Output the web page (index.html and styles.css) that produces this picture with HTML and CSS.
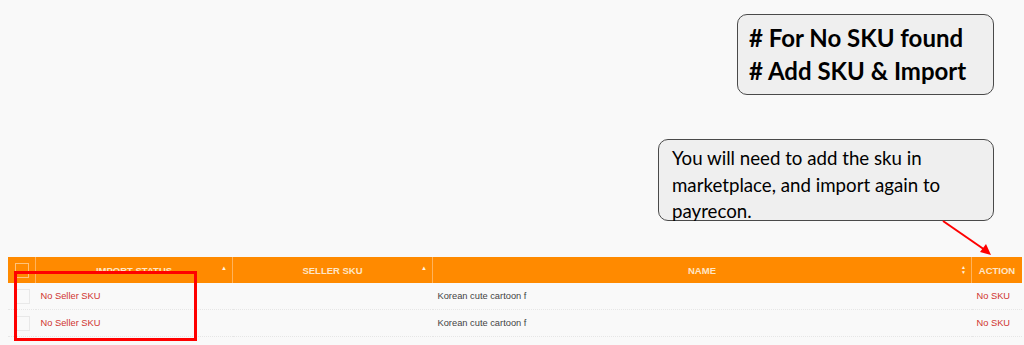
FILE: index.html
```html
<!DOCTYPE html>
<html lang="en">
<head>
  <meta charset="UTF-8" />
  <meta name="viewport" content="width=device-width, initial-scale=1.0" />
  <title>Import Status - No SKU</title>
  <link rel="stylesheet" href="styles.css">
</head>
<body>
  <div class="note note-title">
    # For No SKU found<br>
    # Add SKU &amp; Import
  </div>
  <div class="note note-hint">
    You will need to add the sku in<br>
    marketplace, and import again to<br>
    payrecon.
  </div>
  <svg class="pointer" width="1024" height="345" viewBox="0 0 1024 345">
    <line x1="943" y1="221" x2="985" y2="250" stroke="#f00" stroke-width="2" />
    <polygon points="991,255 980,252 986,244" fill="#f00" />
  </svg>

  <div class="grid-wrap">
    <table class="grid">
      <thead>
        <tr>
          <th class="col-check"><span class="box"></span></th>
          <th class="col-status">Import Status<span class="sort up">&#9650;</span></th>
          <th class="col-sku">Seller SKU<span class="sort up">&#9650;</span></th>
          <th class="col-name">Name<span class="sort both">&#9650;<br>&#9660;</span></th>
          <th class="col-action">Action</th>
        </tr>
      </thead>
      <tbody>
        <tr>
          <td class="col-check"><span class="box"></span></td>
          <td class="warn">No Seller SKU</td>
          <td></td>
          <td>Korean cute cartoon f</td>
          <td class="warn">No SKU</td>
        </tr>
        <tr>
          <td class="col-check"><span class="box"></span></td>
          <td class="warn">No Seller SKU</td>
          <td></td>
          <td>Korean cute cartoon f</td>
          <td class="warn">No SKU</td>
        </tr>
      </tbody>
    </table>
    <div class="highlight"></div>
  </div>
</body>
</html>
```

FILE: styles.css
```css
body {
  margin: 0;
  padding: 257px 2px 0 8px;
  background: #f9f9f9;
  font-family: 'Liberation Sans', Arial, sans-serif;
  height: 345px;
  box-sizing: border-box;
  overflow: hidden;
}

.note {
  position: absolute;
  background: #efefef;
  border: 1px solid #4a4a4a;
  border-radius: 10px;
  color: #000;
  font-family: 'Lato', 'Open Sans', sans-serif;
  box-sizing: border-box;
}

.note-title {
  left: 737px;
  top: 14px;
  width: 257px;
  height: 81px;
  padding: 6px 0 0 11px;
  font-size: 24px;
  font-weight: bold;
  line-height: 33px;
}

.note-hint {
  left: 658px;
  top: 139px;
  width: 336px;
  height: 82px;
  padding: 5px 0 0 13px;
  font-size: 18.7px;
  line-height: 26.5px;
}

.pointer {
  position: absolute;
  left: 0;
  top: 0;
  pointer-events: none;
}

.grid-wrap {
  position: relative;
}

.grid {
  width: 1014px;
  border-collapse: collapse;
  table-layout: fixed;
}

.grid th {
  background: #ff8a00;
  color: #fde6c8;
  font-size: 9.5px;
  font-weight: bold;
  text-transform: uppercase;
  height: 26px;
  padding: 0;
  text-align: center;
  border-left: 1px solid #ffb35c;
  position: relative;
}

.grid th:first-child {
  border-left: none;
}

.col-check { width: 27px; }
.col-status { width: 196px; }
.col-sku { width: 199px; }
.col-action { width: 50px; }

.sort {
  position: absolute;
  right: 5px;
  top: 8px;
  font-size: 6px;
  color: #fff3e0;
}

.sort.both {
  top: 8px;
  line-height: 5px;
  font-size: 5px;
}

.box {
  display: inline-block;
  width: 12px;
  height: 13px;
  border: 1px solid #ffc27a;
  vertical-align: middle;
}

.grid td {
  height: 26px;
  padding: 0 0 0 5px;
  font-size: 9.3px;
  color: #444;
  border-bottom: 1px dotted #e6e6e6;
  white-space: nowrap;
  overflow: hidden;
}

.grid td.col-check {
  padding: 0 0 0 8px;
}

.grid td .box {
  border-color: #e8e8e8;
}

.grid td.warn {
  color: #d0332f;
}

.grid td.col-action {
  padding-left: 7px;
}

.highlight {
  position: absolute;
  left: 6px;
  top: 14px;
  width: 183px;
  height: 70px;
  border: 3px solid #f00;
  box-sizing: border-box;
}
```
